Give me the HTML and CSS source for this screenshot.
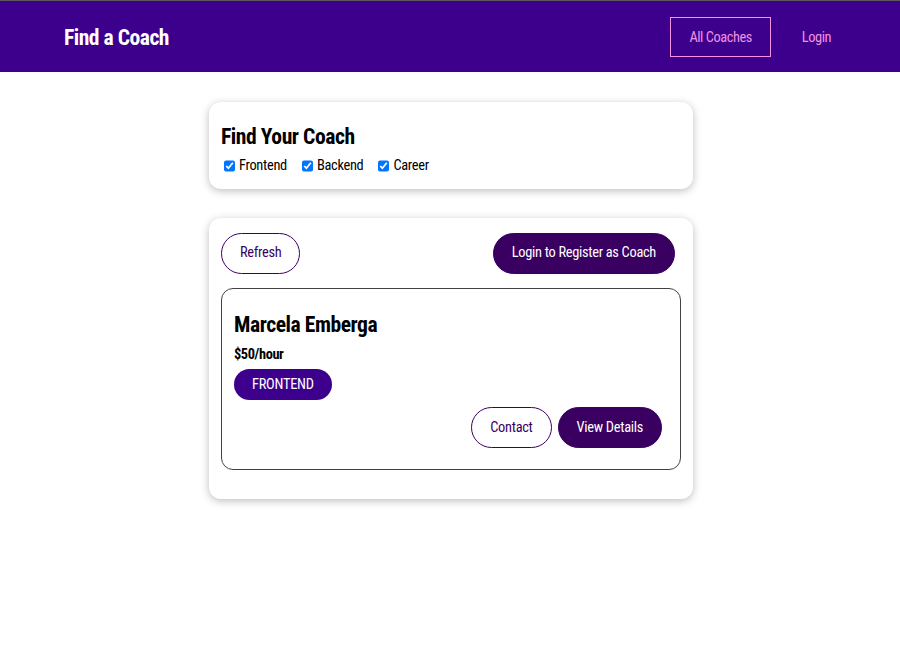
FILE: index.html
```html
<!DOCTYPE html>
<html lang="en">
<head>
<meta charset="utf-8">
<title>Find a Coach</title>
<link rel="stylesheet" href="styles.css">
</head>
<body>
<header class="site-header">
  <nav class="nav">
    <h1 class="brand"><a href="#">Find a Coach</a></h1>
    <ul class="nav-links">
      <li><a href="#" class="nav-link active">All Coaches</a></li>
      <li><a href="#" class="nav-link">Login</a></li>
    </ul>
  </nav>
</header>
<main class="page">
  <section class="card filter-card">
    <h2 class="filter-title">Find Your Coach</h2>
    <div class="filter-options"><span class="filter-option"><input type="checkbox" id="frontend" checked><label for="frontend">Frontend</label></span><span class="filter-option"><input type="checkbox" id="backend" checked><label for="backend">Backend</label></span><span class="filter-option"><input type="checkbox" id="career" checked><label for="career">Career</label></span></div>
  </section>
  <section class="card list-card">
    <div class="controls">
      <button class="btn btn-outline">Refresh</button>
      <a href="#" class="btn">Login to Register as Coach</a>
    </div>
    <ul class="coach-list">
      <li class="coach">
        <h3 class="coach-name">Marcela Emberga</h3>
        <h4 class="coach-rate">$50/hour</h4>
        <div class="badges"><span class="badge">FRONTEND</span></div>
        <div class="actions">
          <a href="#" class="btn btn-outline">Contact</a>
          <a href="#" class="btn">View Details</a>
        </div>
      </li>
    </ul>
  </section>
</main>
</body>
</html>
```
FILE: styles.css
```css
* { box-sizing: border-box; }

html, body {
  margin: 0;
  background: #ffffff;
}

body {
  font-family: Roboto, "Noto Sans", sans-serif;
  font-stretch: 80%;
  font-size: 14.4px;
  letter-spacing: -0.3px;
  color: #000;
}

.site-header {
  height: 72px;
  border-top: 1px solid #5a5a5a;
  padding-top: 1px;
  background: #3d008d;
  display: flex;
  align-items: center;
}

.nav {
  width: 812px;
  margin: 0 auto;
  padding-left: 1px;
  display: flex;
  justify-content: space-between;
  align-items: center;
}

.brand {
  margin: 0;
  font-size: 21.6px;
  font-weight: 700;
  letter-spacing: -0.5px;
}

.brand a {
  color: #ffffff;
  text-decoration: none;
  display: inline-block;
  padding: 10.8px 18px;
  border: 1px solid transparent;
}

.nav-links {
  list-style: none;
  margin: 0;
  padding: 0;
  display: flex;
}

.nav-links li { margin: 0 6px; }

.nav-link {
  display: inline-block;
  color: #f391e3;
  text-decoration: none;
  padding: 10.8px 18px;
  border: 1px solid transparent;
  font-size: 14.4px;
  letter-spacing: -0.45px;
}

.nav-link.active { border-color: #f391e3; }

.page { padding-left: 2px; }

.card {
  max-width: 484px;
  margin: 29px auto;
  padding: 14.4px 12px;
  border-radius: 12px;
  box-shadow: 0 2px 8px rgba(0, 0, 0, 0.26);
  background: #fff;
}

.filter-card { margin-top: 29.5px; }

.filter-title {
  margin: 7.7px 0 7.2px;
  font-size: 21.6px;
  font-weight: 700;
  letter-spacing: -0.45px;
}

.filter-options { padding-top: 1px; }

.filter-option { margin-right: 12px; }

.filter-option input {
  width: 11px;
  height: 12px;
  margin: 3px 4px 3px 3px;
  vertical-align: -2px;
}

.controls {
  display: flex;
  justify-content: space-between;
}

.btn {
  display: inline-block;
  font: inherit;
  letter-spacing: -0.3px;
  padding: 10.8px 18px;
  background: #3a0061;
  border: 1px solid #3a0061;
  color: #fff;
  border-radius: 30px;
  margin-right: 6px;
  text-decoration: none;
  line-height: 17.4px;
  cursor: pointer;
}

.btn-outline {
  background: transparent;
  color: #3a0061;
}

.coach-list {
  list-style: none;
  margin: 0;
  padding: 0;
}

.coach {
  margin: 14.4px 0;
  border: 1px solid #424242;
  border-radius: 12px;
  padding: 15.4px 12px 21px;
}

.coach-name {
  margin: 7.2px 0;
  font-size: 21.6px;
  font-weight: 700;
  letter-spacing: -0.45px;
}

.coach-rate {
  margin: 9.2px 0 6.2px;
  font-size: 14.4px;
  font-weight: 700;
  letter-spacing: -0.4px;
}

.badges { line-height: 1; }

.badge {
  display: inline-block;
  background: #3d008d;
  color: #fff;
  border-radius: 30px;
  padding: 7.2px 18px;
  line-height: 17px;
  margin-right: 6px;
  letter-spacing: -0.25px;
}

.actions {
  display: flex;
  justify-content: flex-end;
  margin-top: 7px;
}
```
